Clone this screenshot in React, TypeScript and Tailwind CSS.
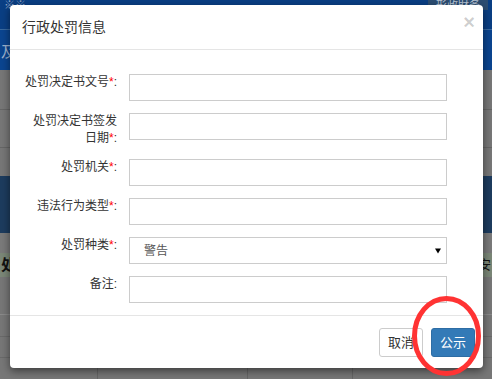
import React from 'react';

const font = { fontFamily: '"Liberation Sans", "Noto Sans CJK SC", sans-serif' };

const fields = [
  { label: '处罚决定书文号', required: true },
  { label: '处罚决定书签发日期', required: true },
  { label: '处罚机关', required: true },
  { label: '违法行为类型', required: true },
  { label: '处罚种类', required: true, select: true },
  { label: '备注', required: false },
];

function Backdrop() {
  return (
    <div className="flex flex-col h-[379px] w-full bg-[#777] overflow-hidden">
      <div className="h-[30px] shrink-0 bg-[#0a3f84] border-b border-[#3a6aa0] flex items-start justify-between px-1 text-[11px] leading-[10px] text-[#8aa3c4]">
        <span>※※</span>
        <span className="bg-[#2c4d72] px-2 text-[#b8c4d4]">形政財务</span>
      </div>
      <div className="h-[40px] shrink-0 bg-[#0b4590] text-[15px] text-[#9cb2cf] pl-px pt-[14px] leading-none">及</div>
      <div className="h-[40px] shrink-0 border-b border-[#666]" />
      <div className="h-[38px] shrink-0 border-b border-[#666]" />
      <div className="h-[29px] shrink-0 border-b border-[#1d3c5e]" />
      <div className="h-[56px] shrink-0 bg-[#1d3c5e]" />
      <div className="h-[20px] shrink-0 bg-[#7a7a7a]" />
      <div className="h-[24px] shrink-0 bg-[#7b8777] flex items-center justify-between text-[15px] font-bold text-[#111] px-[1px]">
        <span>处</span>
        <span className="font-normal text-[13px]">安</span>
      </div>
      <div className="h-[38px] shrink-0 border-b border-[#8a8a8a]" />
      <div className="h-[22px] shrink-0 border-b border-[#6a6a6a]" />
      <div className="h-[21px] shrink-0 border-b border-[#6a6a6a]" />
      <div className="flex-1 flex">
        <div className="w-[98px] border-r border-[#666]" />
        <div className="w-[150px] border-r border-[#666]" />
        <div className="w-[105px] border-r border-[#666]" />
      </div>
    </div>
  );
}

function Field({ label, required, select }: { label: string; required: boolean; select?: boolean }) {
  return (
    <div className="flex items-start gap-[12px]">
      <label className="w-[94px] shrink-0 text-right text-[12px] leading-[17px] text-[#333]">
        {label}
        {required && <span className="text-[#f00]">*</span>}:
      </label>
      {select ? (
        <div className="relative w-[318px] h-[27px] border border-[#ccc] bg-white flex items-center pl-[14px] text-[12px] text-[#555]">
          警告
          <svg className="absolute right-[5px] top-[10px]" width="6" height="6" viewBox="0 0 6 6">
            <path d="M0 0.5 L6 0.5 L3 5.5 Z" fill="#000" />
          </svg>
        </div>
      ) : (
        <input className="w-[318px] h-[27px] border border-[#ccc] bg-white outline-none" />
      )}
    </div>
  );
}

export default function App() {
  return (
    <div className="relative w-[492px] h-[379px] overflow-hidden" style={font}>
      <Backdrop />

      {/* modal */}
      <div className="absolute left-[10px] top-[5px] w-[473px] h-[363px] bg-white rounded-[4px] shadow-[0_3px_9px_rgba(0,0,0,0.5)] flex flex-col">
        <div className="h-[45px] shrink-0 border-b border-[#e5e5e5] flex items-center justify-between pl-[12px] pr-[8px]">
          <h4 className="text-[14px] text-[#333] leading-none">行政处罚信息</h4>
          <span className="text-[20px] font-bold text-black/20 leading-none -mt-[10px]">×</span>
        </div>

        <div className="flex flex-col gap-[12px] pt-[24px] pb-[12px] pl-[13px] border-b border-[#e5e5e5]">
          {fields.map((f) => (
            <Field key={f.label} label={f.label} required={f.required} select={f.select} />
          ))}
        </div>

        <div className="flex justify-end gap-[8px] pt-[12px] pr-[8px]">
          <button className="h-[29px] px-[8px] border border-[#ccc] rounded-[3px] bg-white text-[13px] text-[#333]">取消</button>
          <button className="h-[29px] px-[8px] border border-[#2e6da4] rounded-[3px] bg-[#337ab7] text-[13px] text-white">公示</button>
        </div>
      </div>

      {/* red marker ring */}
      <svg className="absolute left-[409px] top-[293px]" width="75" height="86" viewBox="0 0 75 86">
        <ellipse cx="37.5" cy="43" rx="32" ry="37.5" fill="none" stroke="#ff3333" strokeWidth="5" />
      </svg>
    </div>
  );
}
